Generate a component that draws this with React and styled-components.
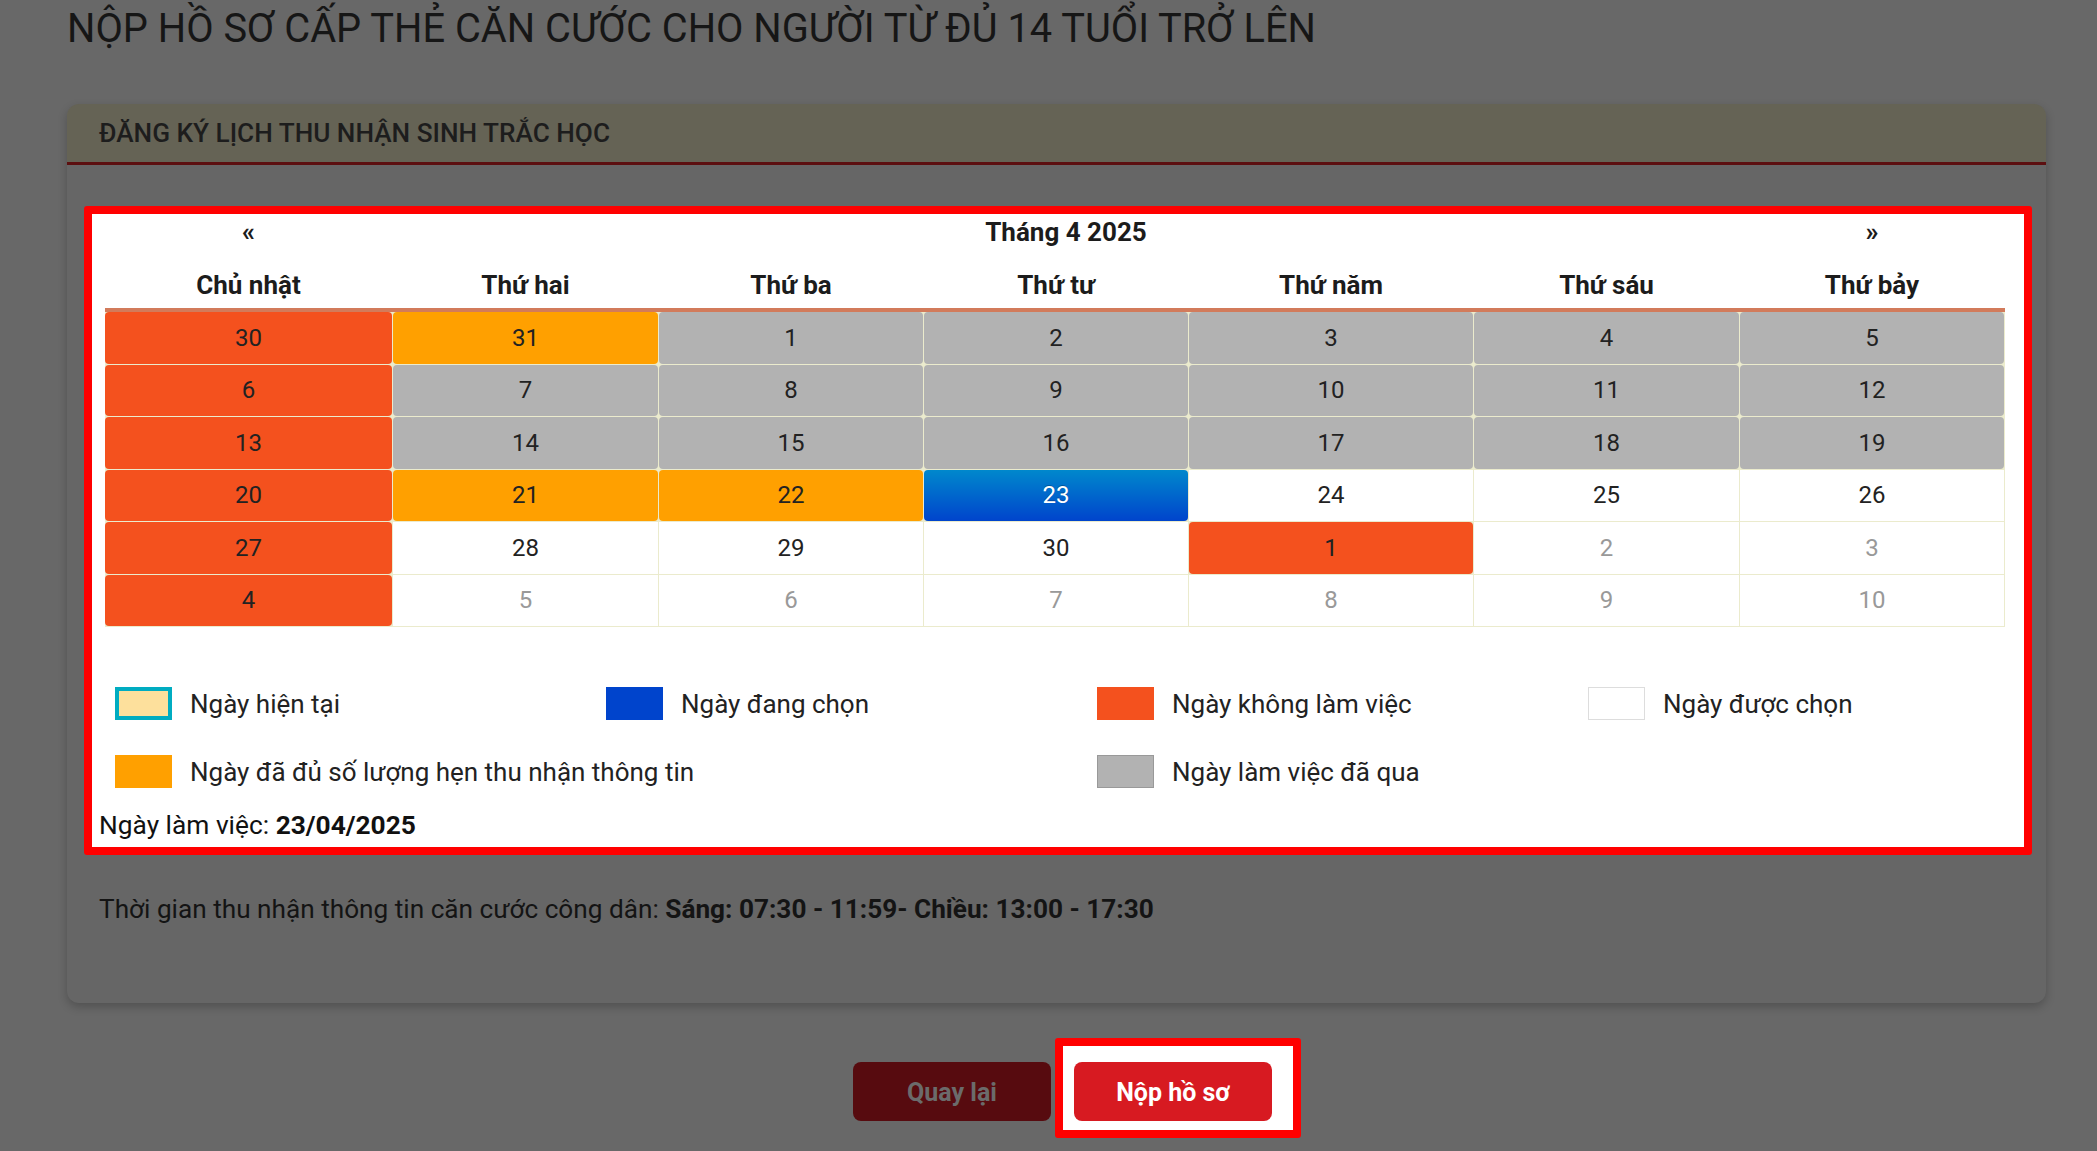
import React from 'react';
import styled, { createGlobalStyle, css } from 'styled-components';

const GlobalStyle = createGlobalStyle`
  html, body {
    margin: 0;
    background: #686868;
  }

  body {
    font-family: Roboto, "Liberation Sans", sans-serif;
    color: #1b1b1b;
  }

  * {
    box-sizing: border-box;
  }
`;

const COLUMNS = '287px 265px 264px 264px 284px 265px 264px';

const Page = styled.div`
  min-height: 1151px;
  padding: 0 51px 0 67px;
`;

const Title = styled.h1`
  margin: 5px 0 0;
  font-size: 39.8px;
  font-weight: 400;
  line-height: 48px;
  color: #161616;
`;

const Card = styled.section`
  margin-top: 51px;
  background: #666;
  border-radius: 12px;
  box-shadow: 0 4px 10px rgba(0, 0, 0, 0.22);
  overflow: hidden;
`;

const CardHeader = styled.div`
  display: flex;
  align-items: center;
  height: 61px;
  padding-left: 32px;
  background: #656355;
  border-bottom: 3px solid #5c0f10;
  font-size: 26.2px;
  font-weight: 500;
  color: #1d1d1d;
`;

const CardBody = styled.div`
  height: 838px;
  padding: 41px 14px 0 17px;
`;

const CalendarFrame = styled.div`
  padding-bottom: 7.5px;
  background: #fff;
  border: 8px solid #ff0000;
  border-radius: 3px;
`;

const Table = styled.div`
  padding: 0 19px 0 13px;
`;

const HeadRow = styled.div`
  display: grid;
  grid-template-columns: ${COLUMNS};
  column-gap: 1px;
  padding-right: 1px;
  text-align: center;
  font-size: 26px;
  font-weight: 700;
  line-height: 31px;
  color: #1c1c1c;
`;

const MonthRow = styled(HeadRow)`
  height: 36px;
  align-items: center;
`;

const MonthLabel = styled.div`
  grid-column: 2 / 7;
`;

const WeekRow = styled(HeadRow)`
  height: 62px;
  align-items: end;
  padding-bottom: 7px;
  border-bottom: 4px solid #d27b5b;
`;

const DayGrid = styled.div`
  display: grid;
  grid-template-columns: ${COLUMNS};
  grid-auto-rows: 51.5px;
  gap: 1px;
  padding: 0 1px 1px 0;
  background: #ebebcd;
`;

const dayTones = {
  off: css`
    background: #f4511e;
    border-radius: 4px;
  `,
  full: css`
    background: #ffa000;
    border-radius: 4px;
  `,
  past: css`
    background: #b2b2b2;
    border-radius: 4px;
  `,
  active: css`
    background: linear-gradient(to bottom, #0088cc, #0044cc);
    border-radius: 4px;
    color: #fff;
    text-shadow: 0 -1px 0 rgba(0, 0, 0, 0.25);
  `,
  open: css`
    background: #fff;
  `,
  muted: css`
    background: #fff;
    color: #999;
  `,
};

const Day = styled.div`
  display: flex;
  align-items: center;
  justify-content: center;
  font-size: 24px;
  color: #222;
  ${props => dayTones[props.tone]}
`;

const Legend = styled.div`
  display: grid;
  grid-template-columns: repeat(4, 491px);
  row-gap: 35px;
  margin-top: 60px;
  padding-left: 23px;
`;

const LegendItem = styled.div`
  display: flex;
  align-items: center;
  gap: 18px;
  height: 33px;
  grid-column: span ${props => props.span || 1};
  font-size: 26px;
  color: #222;
`;

const Swatch = styled.span`
  flex: none;
  width: 57px;
  height: 33px;
  background: ${props => props.fill};
  border: ${props => props.edge || 'none'};
`;

const WorkDay = styled.div`
  margin-top: 21.5px;
  padding-left: 7px;
  font-size: 26.3px;
  line-height: 30px;
  color: #111;
`;

const Hours = styled.p`
  margin: 38.5px 0 0 15px;
  font-size: 26.2px;
  line-height: 30px;
  color: #141414;
`;

const Actions = styled.div`
  display: flex;
  align-items: flex-start;
  justify-content: center;
  gap: 4px;
  margin-top: 35px;
  padding-left: 41px;
`;

const Button = styled.button`
  width: 198px;
  height: 59px;
  padding-top: 3px;
  border: none;
  border-radius: 8px;
  font-family: inherit;
  font-size: 25px;
  font-weight: 700;
  cursor: pointer;
  background: ${props => (props.primary ? '#d71a21' : '#570b0f')};
  color: ${props => (props.primary ? '#fff' : '#6b6b6b')};
  margin-top: ${props => (props.primary ? 0 : '24px')};
`;

const Highlight = styled.div`
  padding: 16px 21px 9px 11px;
  background: #fff;
  border: 8px solid #ff0000;
  border-radius: 3px;
`;

const WEEKDAYS = ['Chủ nhật', 'Thứ hai', 'Thứ ba', 'Thứ tư', 'Thứ năm', 'Thứ sáu', 'Thứ bảy'];

const row = (days, tones) => days.map((d, i) => ({ d, tone: tones[i] }));

const WEEKS = [
  row([30, 31, 1, 2, 3, 4, 5], ['off', 'full', 'past', 'past', 'past', 'past', 'past']),
  row([6, 7, 8, 9, 10, 11, 12], ['off', 'past', 'past', 'past', 'past', 'past', 'past']),
  row([13, 14, 15, 16, 17, 18, 19], ['off', 'past', 'past', 'past', 'past', 'past', 'past']),
  row([20, 21, 22, 23, 24, 25, 26], ['off', 'full', 'full', 'active', 'open', 'open', 'open']),
  row([27, 28, 29, 30, 1, 2, 3], ['off', 'open', 'open', 'open', 'off', 'muted', 'muted']),
  row([4, 5, 6, 7, 8, 9, 10], ['off', 'muted', 'muted', 'muted', 'muted', 'muted', 'muted']),
];

const LEGEND = [
  { label: 'Ngày hiện tại', fill: '#fde09c', edge: '4px solid #00acc1' },
  { label: 'Ngày đang chọn', fill: '#0044cc' },
  { label: 'Ngày không làm việc', fill: '#f4511e' },
  { label: 'Ngày được chọn', fill: '#fff', edge: '1px solid #ddd' },
  { label: 'Ngày đã đủ số lượng hẹn thu nhận thông tin', fill: '#ffa000', span: 2 },
  { label: 'Ngày làm việc đã qua', fill: '#b2b2b2', edge: '1px solid #999', span: 2 },
];

export default function App() {
  return (
    <Page>
      <GlobalStyle />
      <Title>NỘP HỒ SƠ CẤP THẺ CĂN CƯỚC CHO NGƯỜI TỪ ĐỦ 14 TUỔI TRỞ LÊN</Title>
      <Card>
        <CardHeader>ĐĂNG KÝ LỊCH THU NHẬN SINH TRẮC HỌC</CardHeader>
        <CardBody>
          <CalendarFrame>
            <Table>
              <MonthRow>
                <div>«</div>
                <MonthLabel>Tháng 4 2025</MonthLabel>
                <div>»</div>
              </MonthRow>
              <WeekRow>
                {WEEKDAYS.map(name => (
                  <div key={name}>{name}</div>
                ))}
              </WeekRow>
              <DayGrid>
                {WEEKS.flat().map((cell, i) => (
                  <Day key={i} tone={cell.tone}>{cell.d}</Day>
                ))}
              </DayGrid>
            </Table>
            <Legend>
              {LEGEND.map(item => (
                <LegendItem key={item.label} span={item.span}>
                  <Swatch fill={item.fill} edge={item.edge} />
                  {item.label}
                </LegendItem>
              ))}
            </Legend>
            <WorkDay>
              Ngày làm việc: <b>23/04/2025</b>
            </WorkDay>
          </CalendarFrame>
          <Hours>
            Thời gian thu nhận thông tin căn cước công dân: <b>Sáng: 07:30 - 11:59- Chiều: 13:00 - 17:30</b>
          </Hours>
        </CardBody>
      </Card>
      <Actions>
        <Button>Quay lại</Button>
        <Highlight>
          <Button primary>Nộp hồ sơ</Button>
        </Highlight>
      </Actions>
    </Page>
  );
}
